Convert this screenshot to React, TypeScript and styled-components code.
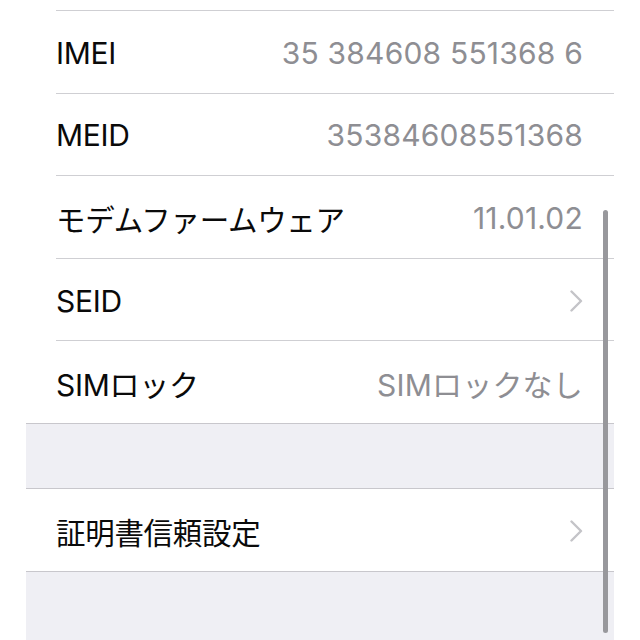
import styled, { createGlobalStyle } from "styled-components";

const GlobalStyle = createGlobalStyle`
  html, body {
    margin: 0;
    padding: 0;
    background: #ffffff;
  }
  body {
    font-family: Inter, "Noto Sans CJK JP", sans-serif;
    -webkit-font-smoothing: antialiased;
  }
`;

const Screen = styled.div`
  position: relative;
  width: 640px;
  height: 640px;
  overflow: hidden;
  background: #ffffff;
`;

const Table = styled.div`
  display: flex;
  flex-direction: column;
  margin-left: 26px;
  width: 588px;
`;

const Cell = styled.div<{ $last?: boolean; $height?: number }>`
  position: relative;
  display: flex;
  align-items: center;
  justify-content: space-between;
  box-sizing: border-box;
  height: ${(p) => p.$height ?? 82.6}px;
  padding: 2px 31px 0 30px;
  background: #ffffff;
  border-bottom: 1px solid ${(p) => (p.$last ? "#c8c7cc" : "transparent")};

  &::after {
    content: "";
    display: ${(p) => (p.$last ? "none" : "block")};
    position: absolute;
    left: 30px;
    right: 0;
    bottom: -1px;
    height: 1px;
    background: #cfcfd3;
  }
`;

const Label = styled.span<{ $jp?: boolean }>`
  font-size: ${(p) => (p.$jp ? 29.5 : 30)}px;
  color: #0a0a0a;
  letter-spacing: -0.3px;
  white-space: nowrap;
`;

const Value = styled.span`
  font-size: 30px;
  color: #8e8e93;
  letter-spacing: 0.2px;
  white-space: nowrap;
`;

const GroupGap = styled.div<{ $height: number }>`
  height: ${(p) => p.$height}px;
  background: #efeff4;
  border-bottom: 1px solid #c8c7cc;
  box-sizing: border-box;

  &:last-child {
    border-bottom: none;
  }
`;

const ScrollThumb = styled.div`
  position: absolute;
  left: 603px;
  top: 210px;
  width: 5px;
  height: 423px;
  border-radius: 3px;
  background: #98989c;
`;

function Chevron() {
  return (
    <svg width="13" height="22" viewBox="0 0 13 22" fill="none">
      <path
        d="M1.5 1.5 L11 11 L1.5 20.5"
        stroke="#c4c4c8"
        strokeWidth="2.4"
        strokeLinecap="round"
        strokeLinejoin="round"
      />
    </svg>
  );
}

type Row = { label: string; value?: string; chevron?: boolean; jp?: boolean; last?: boolean };

const firstGroup: Row[] = [
  { label: "IMEI", value: "35 384608 551368 6" },
  { label: "MEID", value: "35384608551368" },
  { label: "モデムファームウェア", value: "11.01.02", jp: true },
  { label: "SEID", chevron: true },
  { label: "SIMロック", value: "SIMロックなし", last: true },
];

function SettingsRow({ row }: { row: Row }) {
  return (
    <Cell $last={row.last}>
      <Label $jp={row.jp}>{row.label}</Label>
      {row.chevron ? <Chevron /> : <Value>{row.value}</Value>}
    </Cell>
  );
}

export default function App() {
  return (
    <Screen>
      <GlobalStyle />
      <Table>
        <Cell $height={11} />
        {firstGroup.map((row) => (
          <SettingsRow key={row.label} row={row} />
        ))}
        <GroupGap $height={65} />
        <Cell $last $height={83}>
          <Label $jp>証明書信頼設定</Label>
          <Chevron />
        </Cell>
        <GroupGap $height={80} />
      </Table>
      <ScrollThumb />
    </Screen>
  );
}
